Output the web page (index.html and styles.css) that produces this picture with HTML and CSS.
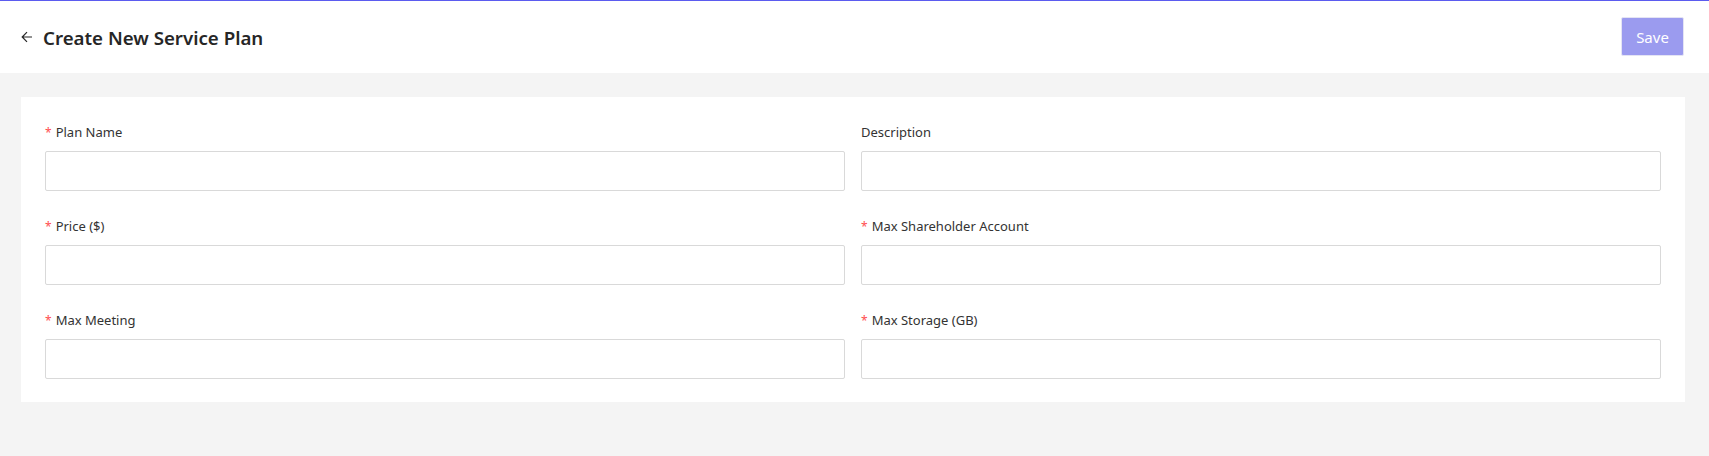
FILE: index.html
```html
<!DOCTYPE html>
<html>
<head>
<meta charset="utf-8">
<link rel="stylesheet" href="styles.css">
</head>
<body>
<div class="page">
  <header class="topbar">
    <div class="title-wrap">
      <svg class="back" width="12" height="12" viewBox="0 0 12 12"><path d="M11 6H1.5M6 1.2L1.2 6L6 10.8" fill="none" stroke="#262626" stroke-width="1.2"/></svg>
      <h1 class="title">Create New Service Plan</h1>
    </div>
    <button class="save">Save</button>
  </header>
  <main class="content">
    <section class="card">
      <div class="field"><label class="label"><span class="req">*</span>Plan Name</label><input class="input" type="text"></div>
      <div class="field"><label class="label">Description</label><input class="input" type="text"></div>
      <div class="field"><label class="label"><span class="req">*</span>Price ($)</label><input class="input" type="text"></div>
      <div class="field"><label class="label"><span class="req">*</span>Max Shareholder Account</label><input class="input" type="text"></div>
      <div class="field"><label class="label"><span class="req">*</span>Max Meeting</label><input class="input" type="text"></div>
      <div class="field"><label class="label"><span class="req">*</span>Max Storage (GB)</label><input class="input" type="text"></div>
    </section>
  </main>
</div>
</body>
</html>
```
FILE: styles.css
```css
* { box-sizing: border-box; }
html, body { margin: 0; padding: 0; }
body {
  font-family: "Noto Sans", "Open Sans", sans-serif;
  background: #f4f4f4;
  color: #262626;
  width: 1709px;
  height: 456px;
  overflow: hidden;
}
.topbar {
  height: 73px;
  background: #fff;
  border-top: 1px solid #5b5bef;
  display: flex;
  align-items: center;
  justify-content: space-between;
  padding: 0 25px 0 21px;
}
.title-wrap { display: flex; align-items: center; gap: 10px; }
.back { display: block; }
.title {
  margin: 0;
  font-size: 18.7px;
  font-weight: 600;
  color: #262626;
  letter-spacing: 0;
}
.save {
  width: 63px;
  height: 39px;
  background: #9b9bef;
  border: 1px solid #e4e4f4;
  border-radius: 2px;
  color: #fff;
  font-family: inherit;
  font-size: 15px;
  padding: 0;
  margin-top: -1px;
}
.content { padding: 24px 24px 0 21px; }
.card {
  background: #fff;
  padding: 24px 24px 0 24px;
  display: grid;
  grid-template-columns: 1fr 1fr;
  column-gap: 16px;
  height: 305px;
}
.field { display: flex; flex-direction: column; margin-bottom: 24px; }
.label {
  font-size: 13px;
  line-height: 22px;
  height: 22px;
  margin-bottom: 8px;
  color: #333;
  font-weight: 400;
}
.req { color: #ff4d4f; margin-right: 4px; font-size: 12px; }
.input {
  height: 40px;
  border: 1px solid #d9d9d9;
  border-radius: 2px;
  background: #fff;
  outline: none;
  font-family: inherit;
}
```
